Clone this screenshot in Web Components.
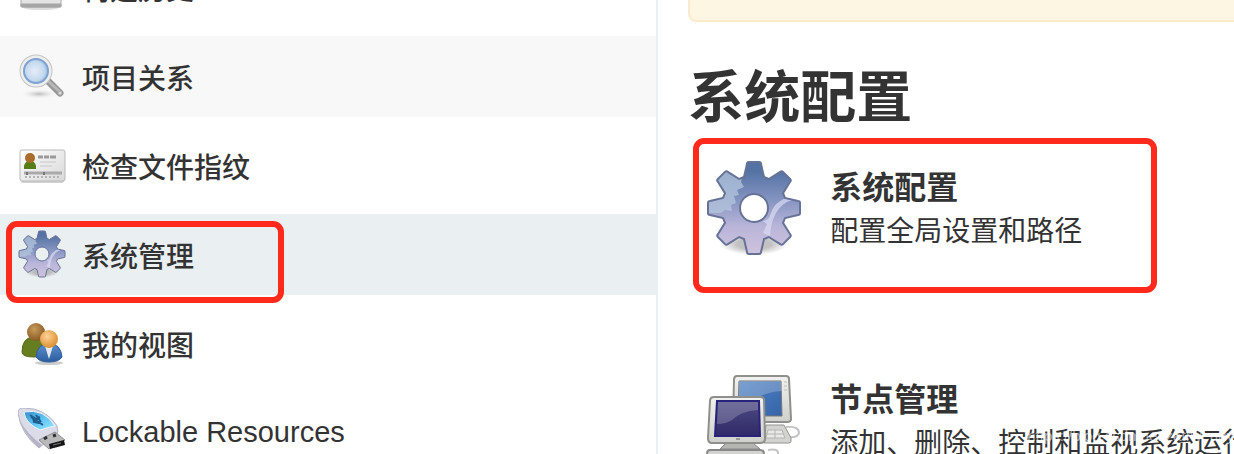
<!DOCTYPE html>
<html lang="zh-CN">
<head>
<meta charset="utf-8">
<meta name="viewport" content="width=device-width, initial-scale=1">
<title>系统管理</title>
<style>
  body {
    margin: 0;
    background: #fff;
    color: #333;
    font-family: "Liberation Sans", "Noto Sans CJK SC", sans-serif;
    font-size: 28px;
  }
</style>
</head>
<body>
<app-layout>
  <side-menu slot="side">
    <menu-item icon="history">构建历史</menu-item>
    <menu-item icon="search" hovered>项目关系</menu-item>
    <menu-item icon="card">检查文件指纹</menu-item>
    <menu-item icon="gear" active marked>系统管理</menu-item>
    <menu-item icon="users">我的视图</menu-item>
    <menu-item icon="usb" latin>Lockable Resources</menu-item>
  </side-menu>

  <notice-bar></notice-bar>
  <section-title>系统配置</section-title>
  <manage-option icon="gear" marked>
    系统配置
    <span slot="description">配置全局设置和路径</span>
  </manage-option>
  <manage-option icon="computers">
    节点管理
    <span slot="description">添加、删除、控制和监视系统运行任务的节点</span>
  </manage-option>
  <water-mark slot="overlay">https://blog.csdn.net/zatrwendy</water-mark>
</app-layout>

<script>
// gear outline with eight teeth, centred in a 96 box
const gearPath = () => {
  const point = (angle, x, y) => {
    const rad = angle * Math.PI / 180
    const px = 48 + x * Math.cos(rad) - y * Math.sin(rad)
    const py = 48 + x * Math.sin(rad) + y * Math.cos(rad)
    return `${px.toFixed(1)} ${py.toFixed(1)}`
  }
  let d = ''
  for (let i = 0; i < 8; i++) {
    const a = i * 45
    d += `${i ? 'L' : 'M'}${point(a, -10, -31)}L${point(a, -7, -44)}Q${point(a, -7, -46)} ${point(a, -5, -46)}`
    d += `L${point(a, 5, -46)}Q${point(a, 7, -46)} ${point(a, 7, -44)}L${point(a, 10, -31)}`
  }
  return `${d}ZM62 48A14 14 0 1 0 34 48A14 14 0 1 0 62 48Z`
}

const icons = {
  history: `
    <svg viewBox="0 0 48 48">
      <ellipse cx="23" cy="45" rx="17" ry="2" fill="#ddd"/>
      <path d="M3 6h40v37q0 1-1 1H4q-1 0-1-1z" fill="#e4e4e4" stroke="#aaa"/>
      <path d="M3 41h40v2q0 1-1 1H4q-1 0-1-1z" fill="#a6a6a6" stroke="#a6a6a6"/>
    </svg>`,
  search: `
    <svg viewBox="0 0 48 48">
      <defs>
        <radialGradient id="lens" cx=".45" cy=".5" r=".55">
          <stop offset="0" stop-color="#e4edf7"/><stop offset=".7" stop-color="#c5daef"/><stop offset="1" stop-color="#9cbde2"/>
        </radialGradient>
        <radialGradient id="shade"><stop stop-color="#bbb"/><stop offset="1" stop-color="#f8f8f8" stop-opacity="0"/></radialGradient>
      </defs>
      <ellipse cx="21" cy="42" rx="19" ry="5" fill="url(#shade)"/>
      <path d="M30 29l12 12" stroke="#989898" stroke-width="7" stroke-linecap="round"/>
      <path d="M29 28l13 12" stroke="#b8b8b8" stroke-width="3"/>
      <circle cx="42" cy="41" r="2" fill="#ddd" stroke="#aaa"/>
      <circle cx="18" cy="19" r="14" fill="none" stroke="#c4c4c4" stroke-width="5"/>
      <circle cx="18" cy="19" r="14" fill="none" stroke="#eee" stroke-width="3"/>
      <circle cx="18" cy="19" r="12" fill="url(#lens)" stroke="#7ea3d2" stroke-width="2"/>
    </svg>`,
  card: `
    <svg viewBox="0 0 48 48">
      <defs><linearGradient id="paper" x1="0" y1="0" x2="1" y2="1"><stop stop-color="#fff"/><stop offset="1" stop-color="#d8d8d8"/></linearGradient></defs>
      <rect x="3" y="38" width="43" height="4" rx="2" fill="#d2d2d2"/>
      <rect x="2" y="9" width="45" height="31" rx="2" fill="url(#paper)" stroke="#b9b9b9"/>
      <path d="M6 28v-3q1-5 6-5t6 5v3z" fill="#577c1a"/>
      <circle cx="12" cy="17" r="5" fill="#a86c2c"/>
      <path d="M20 16h5m1 0h5m1 0h6" stroke="#9a9a9a" stroke-width="3"/>
      <path d="M22 21h16m-16 4h12" stroke="#c6c6c6"/>
      <path d="M6 32h38" stroke="#aaa" stroke-width="3"/>
      <path d="M7 36h36" stroke="#b4b4b4" stroke-width="2" stroke-dasharray="2 2"/>
      <path d="M9 31v3m17-3v3" stroke="#777" stroke-width="2"/>
    </svg>`,
  gear: `
    <svg viewBox="0 0 96 96">
      <defs>
        <linearGradient id="metal" x1="0" y1="0" x2="0" y2="1">
          <stop offset=".1" stop-color="#5473a4"/><stop offset=".42" stop-color="#8695c1"/><stop offset=".7" stop-color="#b9b5da"/><stop offset="1" stop-color="#cfc3dc"/>
        </linearGradient>
        <radialGradient id="shade"><stop offset=".5" stop-color="#999"/><stop offset="1" stop-color="#999" stop-opacity="0"/></radialGradient>
        <clipPath id="shape"><path clip-rule="evenodd" d="${gearPath()}"/></clipPath>
      </defs>
      <ellipse cx="48" cy="84" rx="34" ry="11" fill="url(#shade)" opacity=".6"/>
      <path d="${gearPath()}" fill="url(#metal)" fill-rule="evenodd"/>
      <g clip-path="url(#shape)">
        <path d="M0 0h41l-6 22 3 5-7 3 2 5-5 1 2 7-5 2 1 6-7-1-4 3H0z" fill="#b4c5dc" opacity=".75"/>
        <path d="M96 38q-30 2-32 38l-7-3 4-9-4-3q6 0 8-8 4-15 31-19z" fill="#dcdcf2" opacity=".7"/>
      </g>
      <path d="${gearPath()}" fill="none" stroke="#667296" stroke-width="2"/>
    </svg>`,
  users: `
    <svg viewBox="0 0 48 48">
      <defs>
        <radialGradient id="brown" cx=".4" cy=".35" r=".7"><stop stop-color="#c99a5c"/><stop offset="1" stop-color="#85561e"/></radialGradient>
        <radialGradient id="orange" cx=".4" cy=".35" r=".7"><stop stop-color="#ffd29a"/><stop offset="1" stop-color="#d98b27"/></radialGradient>
        <linearGradient id="blue" x1="0" y1="0" x2="0" y2="1"><stop stop-color="#5e92cf"/><stop offset="1" stop-color="#2c5c9f"/></linearGradient>
      </defs>
      <ellipse cx="31" cy="44" rx="14" ry="2" fill="#ccc"/>
      <path d="M4 33q0-14 11-15 12 0 15 14-4 6-14 6-12 0-12-5z" fill="#667d20" stroke="#54691a"/>
      <circle cx="18" cy="13" r="9" fill="url(#brown)"/>
      <path d="M18 38q1-13 13-14 12 1 13 14-3 5-13 5t-13-5z" fill="url(#blue)" stroke="#315e9a"/>
      <path d="M27 27l4 13 4-13z" fill="#e6eaf0"/>
      <circle cx="31" cy="20" r="9" fill="url(#orange)"/>
    </svg>`,
  usb: `
    <svg viewBox="0 0 48 48">
      <defs><linearGradient id="label" x1="0" y1="0" x2="1" y2="1"><stop stop-color="#348bc9"/><stop offset=".5" stop-color="#5fc4f5"/><stop offset="1" stop-color="#9ae8ff"/></linearGradient></defs>
      <path d="M0 5Q0 0 5 0l11 1q15 4 23 17l1 6-19 16Q3 26 0 5z" fill="#dcdce9" stroke="#b4b4c4"/>
      <path d="M1 11q5 15 20 29l3-3Q8 25 1 11z" fill="#b4b4c6"/>
      <path d="M6 4q20-4 31 14-6 1-15 4Q7 15 6 4z" fill="url(#label)" stroke="#edf6fc"/>
      <path d="M12 7l6 4 4-2m-9 0l12 8m-10-7l1 4 5 1m-3-8l5 7" fill="none" stroke="#1d5f8d" stroke-width="2"/>
      <path d="M21 32l16-8 10 8-16 9z" fill="#b9b9bb" stroke="#8e8e92"/>
      <path d="M31 36l15-4 1 5-15 4z" fill="#161616"/>
      <path d="M26 31l3-2m6-1l3-1" stroke="#333" stroke-width="3"/>
      <path d="M35 37l8-2" stroke="#777"/>
    </svg>`,
  computers: `
    <svg viewBox="0 0 96 96">
      <defs>
        <linearGradient id="back" x1="0" y1="0" x2="1" y2="1"><stop stop-color="#5486c4"/><stop offset="1" stop-color="#3463aa"/></linearGradient>
        <linearGradient id="front" x1="0" y1="0" x2="0" y2="1"><stop stop-color="#4d4b83"/><stop offset="1" stop-color="#302a68"/></linearGradient>
        <linearGradient id="shell" x1="0" y1="0" x2="0" y2="1"><stop stop-color="#f1f1ef"/><stop offset="1" stop-color="#cfcfcb"/></linearGradient>
      </defs>
      <path d="M80 55q13-1 13 6-1 5-11 4" fill="none" stroke="#c4c4c4" stroke-width="2"/>
      <path d="M60 53h18l7 13v3q0 2-2 2H58z" fill="#d3d3cf" stroke="#92928e"/>
      <path d="M62 58h14l3 8H60zM60 62h18M69 58v8" fill="#e8e8e5" stroke="#b4b4b4"/>
      <path d="M31 4h49q3 0 3 3l2 40q0 3-4 3H31q-4 0-4-4l1-38q0-4 3-4z" fill="url(#shell)" stroke="#8f8f8b" stroke-width="2"/>
      <path d="M33 9h42l1 35H32z" fill="url(#back)" stroke="#777"/>
      <path d="M33 9h42l1 10q-17 1-26 8l-17 4z" fill="#fff" opacity=".22"/>
      <path d="M78 10h3m-3 4h3m-3 4h3" stroke="#bbb"/>
      <path d="M62 78q11-2 10 4v12" fill="none" stroke="#c4c4c4" stroke-width="2"/>
      <path d="M20 71h27l7 6H14z" fill="#b5b5b1" stroke="#888"/>
      <path d="M4 78h50q4 0 4 4v12H1V82q0-4 3-4z" fill="#d3d3cf" stroke="#888" stroke-width="2"/>
      <path d="M7 25h46q4 0 4 3l1 39q0 4-5 4H5q-4 0-4-5l2-37q0-4 4-4z" transform="translate(1)" fill="url(#shell)" stroke="#8f8f8b" stroke-width="2"/>
      <path d="M11 29h42l1 35H9z" fill="url(#front)" stroke="#28227a" stroke-width="2"/>
      <path d="M12 30h40v8q-17 1-26 10-6 4-15 4z" fill="#fff" opacity=".2"/>
      <path d="M30 67h4" stroke="#999" stroke-width="2"/>
    </svg>`
}

class UiIcon extends HTMLElement {
  constructor () {
    super()
    this.shadow = this.attachShadow({ mode: 'open' })
  }

  connectedCallback () {
    this.shadow.innerHTML =
    /* html */`
    <style>
      :host {
        display: block;
        flex: none;
      }

      svg {
        display: block;
        width: 100%;
        height: 100%;
        fill: none;
      }
    </style>
    ${icons[this.getAttribute('name')]}
    `
  }
}

class AppLayout extends HTMLElement {
  constructor () {
    super()
    this.shadow = this.attachShadow({ mode: 'open' })
  }

  connectedCallback () {
    this.shadow.innerHTML =
    /* html */`
    <style>
      :host {
        position: relative;
        display: grid;
        grid-template-columns: minmax(0, 8fr) minmax(0, 7fr);
        height: 100vh;
        overflow: hidden;
      }

      aside {
        border-right: 2px solid #eaeff2;
      }

      main {
        padding-left: 30px;
        overflow: hidden;
      }
    </style>

    <aside><slot name="side"></slot></aside>
    <main><slot></slot></main>
    <slot name="overlay"></slot>
    `
  }
}

class SideMenu extends HTMLElement {
  constructor () {
    super()
    this.shadow = this.attachShadow({ mode: 'open' })
  }

  connectedCallback () {
    this.shadow.innerHTML =
    /* html */`
    <style>
      :host {
        display: block;
      }

      nav {
        display: flex;
        flex-direction: column;
        gap: 8px;
        margin-top: -53px;
      }
    </style>

    <nav><slot></slot></nav>
    `
  }
}

class MenuItem extends HTMLElement {
  constructor () {
    super()
    this.shadow = this.attachShadow({ mode: 'open' })
  }

  connectedCallback () {
    this.shadow.innerHTML =
    /* html */`
    <style>
      :host {
        position: relative;
        display: block;
        font-weight: 500;
        line-height: 56px;
      }

      :host([hovered]) {
        background: #f8f8f8;
      }

      :host([active]) {
        background: #eaeff2;
      }

      :host([latin]) {
        font-size: 29px;
        line-height: 48px;
      }

      :host([marked])::after {
        content: "";
        position: absolute;
        top: 7px;
        left: 6px;
        box-sizing: border-box;
        width: 278px;
        height: 82px;
        border: 6px solid #ff291c;
        border-radius: 11px;
        pointer-events: none;
      }

      a {
        display: flex;
        gap: 16px;
        align-items: flex-start;
        padding: 16px 18px 9px;
        color: inherit;
        text-decoration: none;
      }

      ui-icon {
        width: 48px;
        height: 48px;
      }
    </style>

    <a href="#">
      <ui-icon name="${this.getAttribute('icon')}"></ui-icon>
      <span><slot></slot></span>
    </a>
    `
  }
}

class NoticeBar extends HTMLElement {
  constructor () {
    super()
    this.shadow = this.attachShadow({ mode: 'open' })
  }

  connectedCallback () {
    this.shadow.innerHTML =
    /* html */`
    <style>
      :host {
        display: block;
        box-sizing: border-box;
        height: 62px;
        margin: -40px -30px 0 0;
        border: 2px solid #faebcc;
        border-radius: 8px;
        background: #fdf6e3;
      }
    </style>
    `
  }
}

class SectionTitle extends HTMLElement {
  constructor () {
    super()
    this.shadow = this.attachShadow({ mode: 'open' })
  }

  connectedCallback () {
    this.shadow.innerHTML =
    /* html */`
    <style>
      :host {
        display: block;
      }

      h1 {
        margin: 40px 0 26px;
        font-size: 56px;
        font-weight: 700;
        line-height: 72px;
      }
    </style>

    <h1><slot></slot></h1>
    `
  }
}

class ManageOption extends HTMLElement {
  constructor () {
    super()
    this.shadow = this.attachShadow({ mode: 'open' })
  }

  connectedCallback () {
    this.shadow.innerHTML =
    /* html */`
    <style>
      :host {
        position: relative;
        display: block;
        margin-bottom: 116px;
      }

      :host([marked])::after {
        content: "";
        position: absolute;
        top: -22px;
        left: 5px;
        box-sizing: border-box;
        width: 464px;
        height: 155px;
        border: 6px solid #ff291c;
        border-radius: 11px;
        pointer-events: none;
      }

      a {
        display: flex;
        gap: 28px;
        padding-left: 18px;
        color: inherit;
        text-decoration: none;
        white-space: nowrap;
      }

      ui-icon {
        width: 96px;
        height: 96px;
      }

      h2,
      p {
        margin: 0;
        line-height: 44px;
      }

      h2 {
        margin-top: 6px;
        font-size: 32px;
        font-weight: 700;
      }

      p {
        font-size: 28px;
      }
    </style>

    <a href="#">
      <ui-icon name="${this.getAttribute('icon')}"></ui-icon>
      <div>
        <h2><slot></slot></h2>
        <p><slot name="description"></slot></p>
      </div>
    </a>
    `
  }
}

class WaterMark extends HTMLElement {
  constructor () {
    super()
    this.shadow = this.attachShadow({ mode: 'open' })
  }

  connectedCallback () {
    this.shadow.innerHTML =
    /* html */`
    <style>
      :host {
        position: absolute;
        right: 0;
        bottom: 8px;
        color: rgba(255, 255, 255, 0.6);
        font-size: 15px;
        line-height: 20px;
        pointer-events: none;
      }
    </style>

    <slot></slot>
    `
  }
}

customElements.define('ui-icon', UiIcon)
customElements.define('app-layout', AppLayout)
customElements.define('side-menu', SideMenu)
customElements.define('menu-item', MenuItem)
customElements.define('notice-bar', NoticeBar)
customElements.define('section-title', SectionTitle)
customElements.define('manage-option', ManageOption)
customElements.define('water-mark', WaterMark)
</script>
</body>
</html>
